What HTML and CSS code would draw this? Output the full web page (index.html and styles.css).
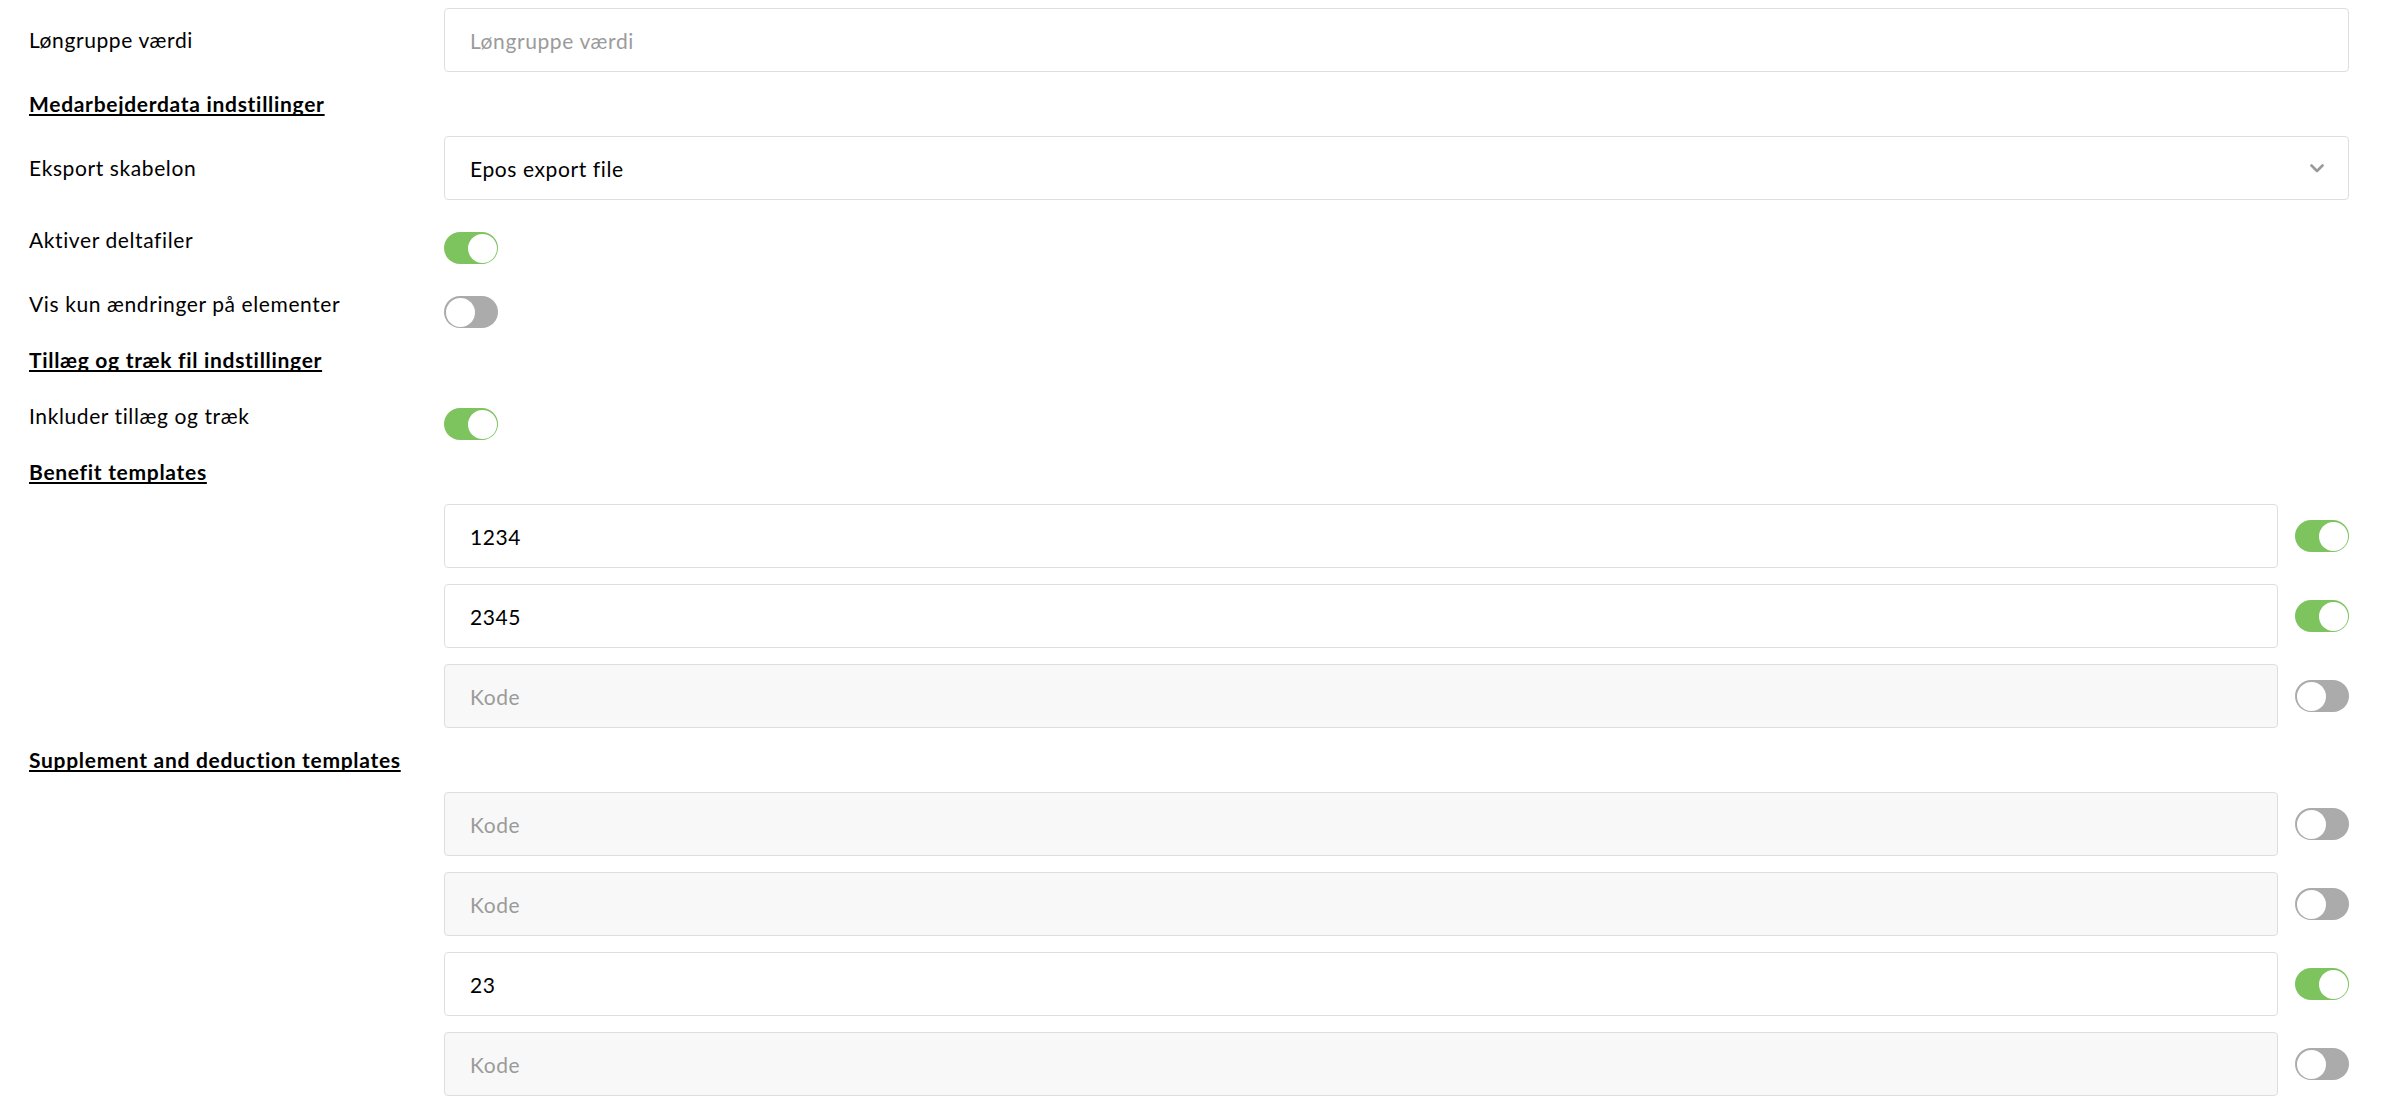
FILE: index.html
```html
<!DOCTYPE html>
<html lang="da">
<head>
<meta charset="utf-8">
<title>Indstillinger</title>
<link rel="stylesheet" href="styles.css">
</head>
<body>
<form class="settings">
  <div class="row row-input">
    <label class="label">Løngruppe værdi</label>
    <input class="field" type="text" placeholder="Løngruppe værdi">
  </div>

  <h3 class="heading">Medarbejderdata indstillinger</h3>

  <div class="row row-input">
    <label class="label">Eksport skabelon</label>
    <div class="field select">
      <span>Epos export file</span>
      <svg class="chevron" width="14" height="9" viewBox="0 0 14 9"><path d="M1.5 1.5 L7 7 L12.5 1.5" fill="none" stroke="#9a9a9a" stroke-width="2.6" stroke-linecap="round" stroke-linejoin="round"/></svg>
    </div>
  </div>

  <div class="row row-toggle">
    <label class="label">Aktiver deltafiler</label>
    <span class="toggle on"><span class="knob"></span></span>
  </div>

  <div class="row row-toggle">
    <label class="label">Vis kun ændringer på elementer</label>
    <span class="toggle"><span class="knob"></span></span>
  </div>

  <h3 class="heading">Tillæg og træk fil indstillinger</h3>

  <div class="row row-toggle">
    <label class="label">Inkluder tillæg og træk</label>
    <span class="toggle on"><span class="knob"></span></span>
  </div>

  <h3 class="heading">Benefit templates</h3>

  <div class="row row-item">
    <span class="label"></span>
    <input class="field" type="text" value="1234">
    <span class="toggle on"><span class="knob"></span></span>
  </div>
  <div class="row row-item">
    <span class="label"></span>
    <input class="field" type="text" value="2345">
    <span class="toggle on"><span class="knob"></span></span>
  </div>
  <div class="row row-item">
    <span class="label"></span>
    <input class="field empty" type="text" placeholder="Kode">
    <span class="toggle"><span class="knob"></span></span>
  </div>

  <h3 class="heading">Supplement and deduction templates</h3>

  <div class="row row-item">
    <span class="label"></span>
    <input class="field empty" type="text" placeholder="Kode">
    <span class="toggle"><span class="knob"></span></span>
  </div>
  <div class="row row-item">
    <span class="label"></span>
    <input class="field empty" type="text" placeholder="Kode">
    <span class="toggle"><span class="knob"></span></span>
  </div>
  <div class="row row-item">
    <span class="label"></span>
    <input class="field" type="text" value="23">
    <span class="toggle on"><span class="knob"></span></span>
  </div>
  <div class="row row-item">
    <span class="label"></span>
    <input class="field empty" type="text" placeholder="Kode">
    <span class="toggle"><span class="knob"></span></span>
  </div>
</form>
</body>
</html>
```

FILE: styles.css
```css
* {
  box-sizing: border-box;
}

html,
body {
  margin: 0;
  background: #ffffff;
}

body {
  font-family: Lato, "Liberation Sans", sans-serif;
  font-size: 21px;
  letter-spacing: 0.6px;
  color: #000000;
}

.settings {
  padding: 8px 33px 0 29px;
}

.row {
  display: flex;
  margin-bottom: 16px;
}

.label {
  width: 415px;
  flex: none;
  line-height: 32px;
}

.row-input {
  align-items: center;
}

.field {
  flex: 1;
  min-width: 0;
  height: 64px;
  border: 1px solid #dedede;
  border-radius: 4px;
  padding: 0 25px;
  font-family: inherit;
  font-size: 21px;
  letter-spacing: 0.6px;
  color: #000000;
  background: #ffffff;
  outline: none;
}

.field::placeholder {
  color: #9b9b9b;
  opacity: 1;
}

.field.empty {
  background: #f8f8f8;
}

.select {
  display: flex;
  align-items: center;
  justify-content: space-between;
  padding-right: 24px;
}

.chevron {
  display: block;
}

.heading {
  margin: 0 0 16px;
  font-size: 21px;
  font-weight: 700;
  letter-spacing: 0.7px;
  line-height: 32px;
  color: #000000;
  text-decoration: underline;
  text-decoration-thickness: 2px;
  text-underline-offset: 2px;
  text-decoration-skip-ink: none;
}

.row-toggle {
  padding-top: 8px;
  align-items: flex-start;
}

.row-toggle .toggle {
  margin-top: 8px;
}

.row-item {
  align-items: center;
}

.row-item .toggle {
  margin-left: 17px;
}

.toggle {
  position: relative;
  flex: none;
  width: 54px;
  height: 32px;
  border-radius: 16px;
  background: #ababab;
}

.toggle.on {
  background: #7ec45e;
}

.knob {
  position: absolute;
  top: 1.5px;
  left: 1.5px;
  width: 29px;
  height: 29px;
  border-radius: 50%;
  background: #ffffff;
}

.toggle.on .knob {
  left: 23.5px;
}
```
